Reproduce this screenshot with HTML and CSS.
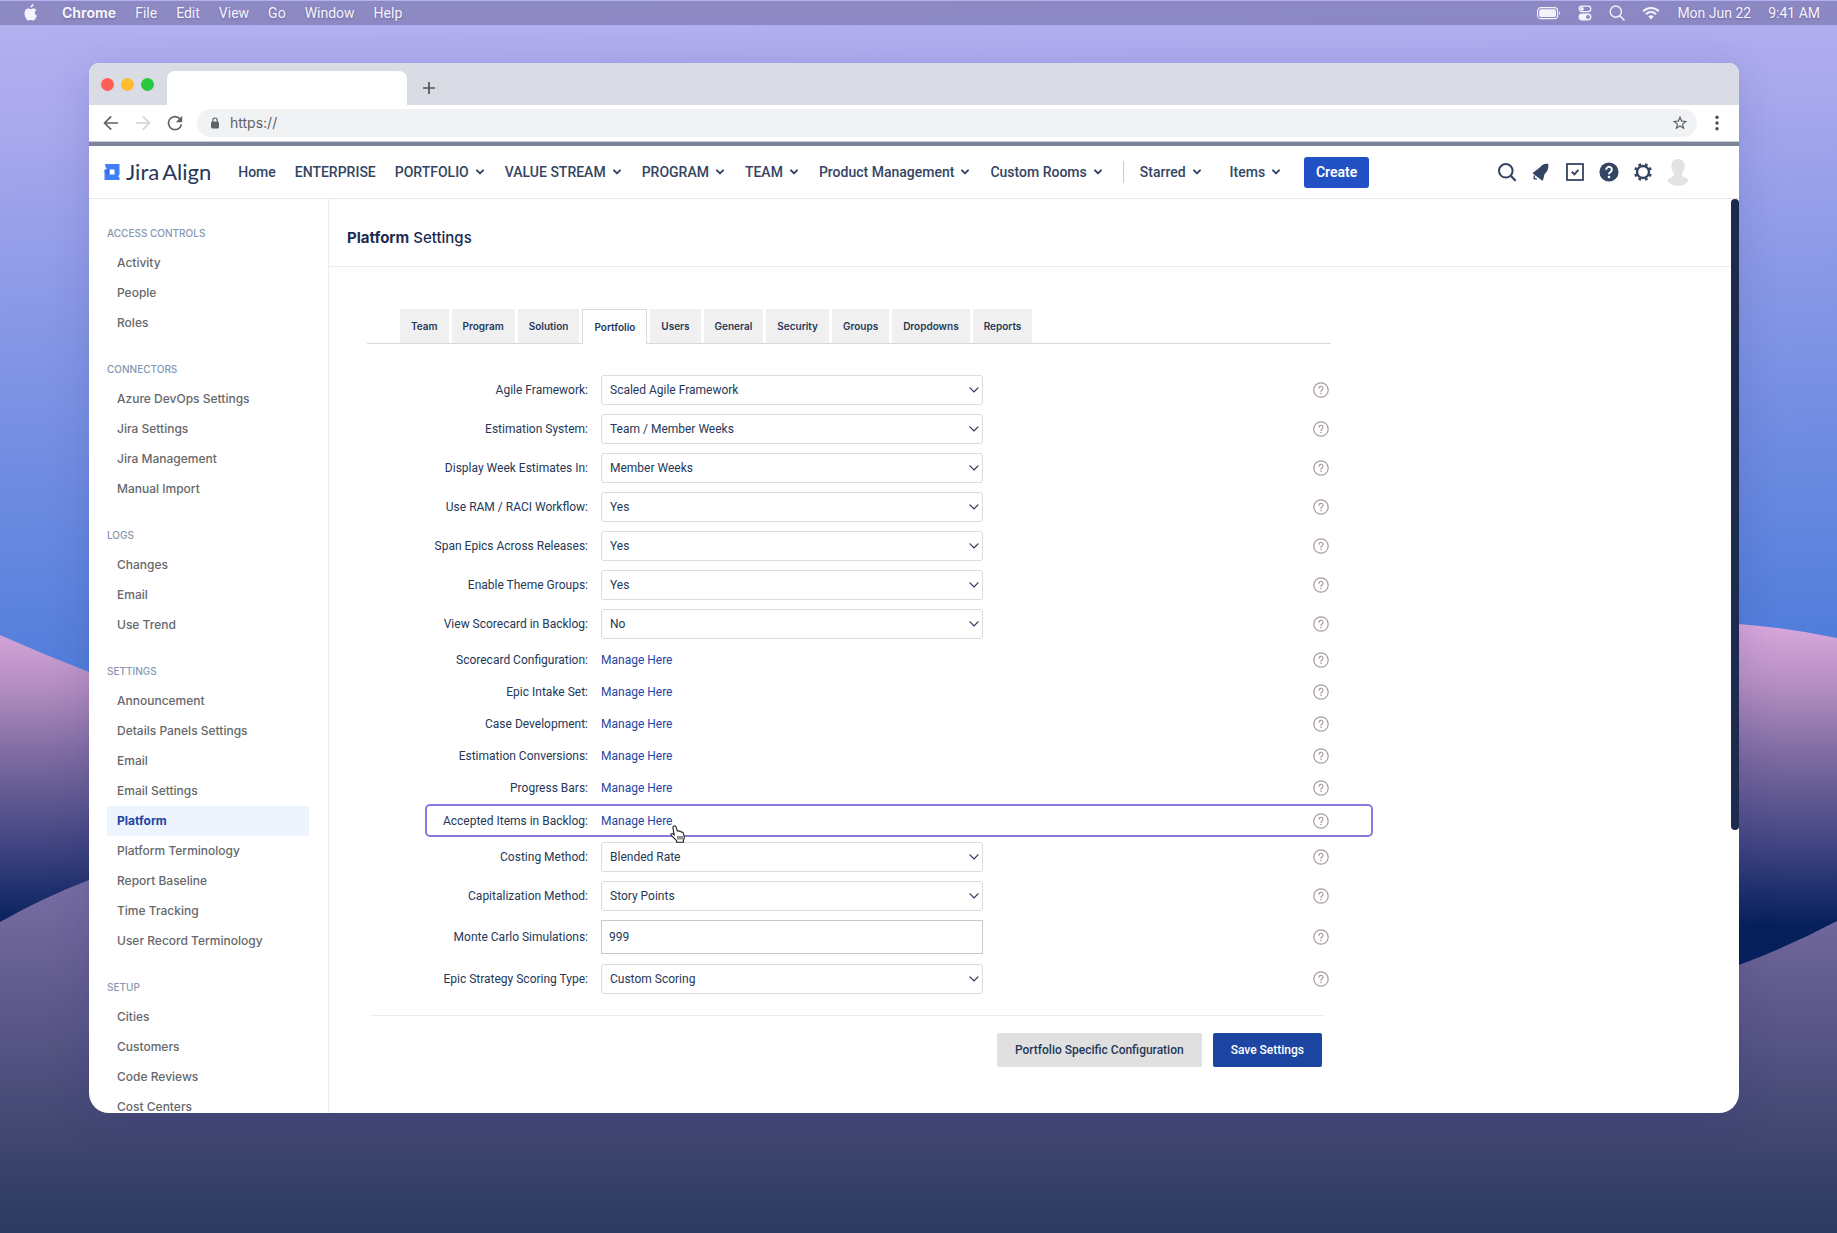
FILE: index.html
```html
<!DOCTYPE html>
<html lang="en">
<head>
<meta charset="utf-8">
<title>Platform Settings</title>
<link rel="stylesheet" href="styles.css">
</head>
<body>
<svg class="defs" aria-hidden="true">
  <symbol id="chev" viewBox="0 0 10 8"><path d="M2 2.4 5 5.4 8 2.4" fill="none" stroke="currentColor" stroke-width="2" stroke-linecap="round" stroke-linejoin="round"/></symbol>
  <symbol id="caret" viewBox="0 0 10 8"><path d="M1 1.8 5 6 9 1.8" fill="none" stroke="currentColor" stroke-width="1.2" stroke-linecap="round"/></symbol>
  <symbol id="help" viewBox="0 0 16 16"><circle cx="8" cy="8" r="7.2" fill="none" stroke="currentColor" stroke-width="1.2"/><path d="M6 6.3a2 2 0 1 1 3 1.7c-.7.4-1 .7-1 1.4" fill="none" stroke="currentColor" stroke-width="1.2" stroke-linecap="round"/><circle cx="8" cy="11.5" r=".8" fill="currentColor"/></symbol>
</svg>
<div class="desktop">
  <svg class="wallpaper" viewBox="0 0 1837 1233" preserveAspectRatio="none" aria-hidden="true">
    <defs>
      <linearGradient id="sky" gradientUnits="userSpaceOnUse" x1="900" y1="0" x2="915" y2="680"><stop offset="0" stop-color="#b4b0f0"/><stop offset=".15" stop-color="#aaa9ed"/><stop offset=".45" stop-color="#8797e6"/><stop offset="1" stop-color="#4d7cda"/></linearGradient>
      <linearGradient id="far" gradientUnits="userSpaceOnUse" x1="0" y1="620" x2="0" y2="925"><stop offset="0" stop-color="#dba9de"/><stop offset=".2" stop-color="#b890c4"/><stop offset=".45" stop-color="#7c6aa0"/><stop offset=".75" stop-color="#3e4380"/><stop offset="1" stop-color="#06205c"/></linearGradient>
      <linearGradient id="near" gradientUnits="userSpaceOnUse" x1="0" y1="870" x2="0" y2="1233"><stop offset="0" stop-color="#7b6fa6"/><stop offset=".35" stop-color="#605b8c"/><stop offset=".7" stop-color="#434873"/><stop offset="1" stop-color="#2b3a5f"/></linearGradient>
    </defs>
    <path fill="url(#sky)" d="M0 0H1837V1233H0Z"/>
    <path fill="url(#far)" d="M0 635Q45 655 89 672L700 800 1400 640Q1600 615 1739 624 1790 628 1837 638V1233H0Z"/>
    <path fill="url(#near)" d="M0 922Q42 898 89 880L500 800 1300 1000 1739 965Q1790 946 1837 921V1233H0Z"/>
  </svg>

  <header class="menubar">
    <svg class="apple" viewBox="0 0 14 18" aria-hidden="true"><path fill="currentColor" d="M9.6 0c.1 1-.3 1.900-.9 2.600-.6.7-1.400 1.100-2.200 1.100-.1-1 .3-1.900.9-2.500C8 .5 8.900.1 9.600 0Zm2.900 6c-1 .6-1.600 1.500-1.600 2.700 0 1.400.8 2.400 2.100 2.900-.4 1.200-1 2.300-1.700 3.300-.6.8-1.200 1.600-2.200 1.600-.9 0-1.200-.6-2.300-.6s-1.400.6-2.300.6c-.9 0-1.600-.8-2.200-1.700C1 12.900.2 10.300.6 8.100.9 6 2.400 4.500 4.200 4.500c1 0 1.800.7 2.500.7s1.700-.8 2.900-.7c1.200 0 2.200.6 2.900 1.500Z"/></svg>
    <strong>Chrome</strong><span>File</span><span>Edit</span><span>View</span><span>Go</span><span>Window</span><span>Help</span>
    <div class="status">
      <svg width="24" height="14" viewBox="0 0 24 14" aria-hidden="true"><rect x=".6" y="1.600" width="20" height="11" rx="3.200" fill="none" stroke="currentColor" stroke-width="1.100"/><rect x="2.200" y="3.200" width="16.800" height="7.800" rx="1.800" fill="currentColor"/><path d="M22 5.200c1.300.6 1.300 3.200 0 3.800Z" fill="currentColor"/></svg>
      <svg width="14" height="16" viewBox="0 0 14 16" aria-hidden="true"><rect x="1.200" y="1.200" width="11.600" height="5.400" rx="2.700" fill="none" stroke="currentColor" stroke-width="1.200"/><circle cx="4" cy="3.900" r="1.800" fill="currentColor"/><path fill="currentColor" fill-rule="evenodd" d="M4 8.600h6a3.400 3.400 0 0 1 0 6.800H4a3.400 3.400 0 0 1 0-6.800Zm6 1.400a2 2 0 1 0 0 4 2 2 0 0 0 0-4Z"/></svg>
      <svg width="16" height="16" viewBox="0 0 16 16" aria-hidden="true"><circle cx="6.800" cy="6.600" r="5.600" fill="none" stroke="currentColor" stroke-width="1.400"/><path d="m11 11 4 4" stroke="currentColor" stroke-width="1.600" stroke-linecap="round"/></svg>
      <svg width="18" height="14" viewBox="0 0 18 14" aria-hidden="true"><g fill="none" stroke="currentColor" stroke-width="2"><path d="M1.200 5.300a11 11 0 0 1 15.600 0"/><path d="M4 8.200a7 7 0 0 1 10 0"/></g><path d="M9 13.500 6.300 10.600a3.900 3.900 0 0 1 5.400 0Z" fill="currentColor"/></svg>
      <span>Mon Jun 22</span><span>9:41 AM</span>
    </div>
  </header>

  <div class="window">
    <div class="tabstrip">
      <i class="dot red"></i><i class="dot amber"></i><i class="dot green"></i>
      <div class="browser-tab"></div>
      <button class="newtab" aria-label="New tab"><svg width="12" height="12" viewBox="0 0 12 12"><path d="M6 0V12M0 6H12" stroke="currentColor" stroke-width="1.700"/></svg></button>
    </div>
    <div class="toolbar">
      <button aria-label="Back"><svg width="16" height="16" viewBox="0 0 16 16"><path d="M15 8H2M8.200 1.400 1.600 8l6.600 6.600" fill="none" stroke="#5f6368" stroke-width="1.700"/></svg></button>
      <button aria-label="Forward"><svg width="16" height="16" viewBox="0 0 16 16"><path d="M1 8h13M7.800 1.400 14.400 8l-6.600 6.600" fill="none" stroke="#d3d4d6" stroke-width="1.700"/></svg></button>
      <button aria-label="Reload"><svg width="16" height="16" viewBox="0 0 16 16"><path d="M13.400 4.400A6.500 6.500 0 1 0 14.400 9.400" fill="none" stroke="#5f6368" stroke-width="1.700"/><path d="M15.200.8v6.400H8.800Z" fill="#5f6368"/></svg></button>
      <label class="address">
        <svg width="10" height="12" viewBox="0 0 10 12" aria-hidden="true"><rect x="1" y="4.500" width="8" height="7" rx="1.500" fill="#5f6368"/><path d="M2.800 5V3.200a2.200 2.200 0 0 1 4.400 0V5" fill="none" stroke="#5f6368" stroke-width="1.200"/></svg>
        <input type="text" value="https://" aria-label="Address">
        <svg width="14" height="14" viewBox="0 0 14 14" aria-hidden="true"><path d="m7 1.200 1.600 3.900 4.200.3-3.200 2.700 1 4.100L7 10l-3.600 2.200 1-4.100L1.200 5.400l4.200-.3Z" fill="none" stroke="#5f6368" stroke-width="1.200"/></svg>
      </label>
      <button class="dots" aria-label="Menu"><svg width="4" height="16" viewBox="0 0 4 16"><g fill="#4a4d52"><circle cx="2" cy="2.300" r="1.700"/><circle cx="2" cy="8" r="1.700"/><circle cx="2" cy="13.700" r="1.700"/></g></svg></button>
    </div>

    <nav class="topnav">
      <a class="logo" href="#"><svg width="16" height="16" viewBox="0 0 16 16" aria-hidden="true"><path fill="#3f80f7" fill-rule="evenodd" d="M1 0H15.500V11Q13 12 15.500 13.500V16H.5V5.500H3Q1.200 4 1 0ZM5.500 5.500V10.500H10.500V5.500Z"/><path fill="#2360d8" d="M.5 5.500H5.500V10.500H4Q.5 10 .5 5.500Z" opacity=".6"/></svg><span>Jira</span><span>Align</span></a>
      <a href="#">Home</a>
      <a href="#">ENTERPRISE</a>
      <a class="drop" href="#">PORTFOLIO<svg><use href="#chev"/></svg></a>
      <a class="drop" href="#">VALUE STREAM<svg><use href="#chev"/></svg></a>
      <a class="drop" href="#">PROGRAM<svg><use href="#chev"/></svg></a>
      <a class="drop" href="#">TEAM<svg><use href="#chev"/></svg></a>
      <a class="drop" href="#">Product Management<svg><use href="#chev"/></svg></a>
      <a class="drop" href="#">Custom Rooms<svg><use href="#chev"/></svg></a>
      <a class="drop sep" href="#">Starred<svg><use href="#chev"/></svg></a>
      <a class="drop items" href="#">Items<svg><use href="#chev"/></svg></a>
      <button class="create">Create</button>
      <div class="tools">
        <button aria-label="Search"><svg viewBox="0 0 20 20"><circle cx="8.800" cy="8.800" r="6.800" fill="none" stroke="currentColor" stroke-width="2"/><path d="m13.800 13.800 4.200 4.400" stroke="currentColor" stroke-width="2.200" stroke-linecap="round"/></svg></button>
        <button aria-label="Announcements"><svg viewBox="0 0 20 20"><path fill="currentColor" d="M17.300 1.800c-4.500-.4-6.400.9-8 3.200L2 10.700c-.4.4-.3.8.1 1L11 18.500c.4.300.8.100 1-.3l1.500-6c3.300-2.700 4.300-6 3.800-10.400Z"/><path d="M3.500 13.500 3 16.500l2.800.6" fill="none" stroke="currentColor" stroke-width="1.400"/></svg></button>
        <button aria-label="Tasks"><svg viewBox="0 0 20 20"><rect x="2" y="2" width="16" height="16" fill="none" stroke="currentColor" stroke-width="1.800"/><path d="m6.800 9.800 2.600 2.600 4-4.600" fill="none" stroke="currentColor" stroke-width="2"/></svg></button>
        <button aria-label="Help"><svg viewBox="0 0 20 20"><circle cx="10" cy="10" r="9.600" fill="currentColor"/><path d="M7.200 7.700a2.800 2.800 0 1 1 4.300 2.300c-1 .7-1.500 1.100-1.500 2.200" fill="none" stroke="#fff" stroke-width="2"/><circle cx="10" cy="15" r="1.300" fill="#fff"/></svg></button>
        <button aria-label="Settings"><svg viewBox="0 0 20 20"><circle cx="10" cy="10" r="6" fill="none" stroke="currentColor" stroke-width="2.400"/><path d="M7.200 4 6.400 1.700M12.800 4 13.600 1.700M7.200 16 6.400 18.300M12.800 16 13.600 18.300M4 7.200 1.700 6.400M4 12.800 1.700 13.600M16 7.200 18.300 6.400M16 12.800 18.300 13.600" stroke="currentColor" stroke-width="2.800"/></svg></button>
        <button class="avatar" aria-label="Profile"><svg viewBox="0 0 22 28"><path fill="#e3e3e4" d="M11 1c4 0 6.600 2.500 6.500 6.300 0 1.200.3 3-.1 4-.5 1.500-1.300 2.200-2 3.700-.5 1.200-.6 2.700.8 3.400 2.300.8 4.800 2.200 5.300 4.400C19 26.500 15 28 11 28S3 26.500.5 22.800c.5-2.200 3-3.600 5.300-4.400 1.400-.7 1.300-2.200.8-3.400-.7-1.500-1.500-2.200-2-3.700-.4-1-.1-2.800-.1-4C4.400 3.500 7 1 11 1Z"/></svg></button>
      </div>
    </nav>

    <div class="body">
      <aside class="sidebar">
        <h2>ACCESS CONTROLS</h2>
        <ul><li><a href="#">Activity</a></li><li><a href="#">People</a></li><li><a href="#">Roles</a></li></ul>
        <h2>CONNECTORS</h2>
        <ul><li><a href="#">Azure DevOps Settings</a></li><li><a href="#">Jira Settings</a></li><li><a href="#">Jira Management</a></li><li><a href="#">Manual Import</a></li></ul>
        <h2>LOGS</h2>
        <ul><li><a href="#">Changes</a></li><li><a href="#">Email</a></li><li><a href="#">Use Trend</a></li></ul>
        <h2>SETTINGS</h2>
        <ul><li><a href="#">Announcement</a></li><li><a href="#">Details Panels Settings</a></li><li><a href="#">Email</a></li><li><a href="#">Email Settings</a></li><li><a class="current" href="#">Platform</a></li><li><a href="#">Platform Terminology</a></li><li><a href="#">Report Baseline</a></li><li><a href="#">Time Tracking</a></li><li><a href="#">User Record Terminology</a></li></ul>
        <h2>SETUP</h2>
        <ul><li><a href="#">Cities</a></li><li><a href="#">Customers</a></li><li><a href="#">Code Reviews</a></li><li><a href="#">Cost Centers</a></li></ul>
      </aside>

      <main class="main">
        <h1><b>Platform</b> Settings</h1>
        <div class="content">
          <div class="tabs" role="tablist">
            <button role="tab">Team</button><button role="tab">Program</button><button role="tab">Solution</button><button role="tab" class="on" aria-selected="true">Portfolio</button><button role="tab">Users</button><button role="tab">General</button><button role="tab">Security</button><button role="tab">Groups</button><button role="tab">Dropdowns</button><button role="tab">Reports</button>
          </div>
          <form class="form">
            <div class="row"><label for="f1">Agile Framework:</label><span class="select"><select id="f1"><option>Scaled Agile Framework</option></select><svg><use href="#caret"/></svg></span><svg class="help"><use href="#help"/></svg></div>
            <div class="row"><label for="f2">Estimation System:</label><span class="select"><select id="f2"><option>Team / Member Weeks</option></select><svg><use href="#caret"/></svg></span><svg class="help"><use href="#help"/></svg></div>
            <div class="row"><label for="f3">Display Week Estimates In:</label><span class="select"><select id="f3"><option>Member Weeks</option></select><svg><use href="#caret"/></svg></span><svg class="help"><use href="#help"/></svg></div>
            <div class="row"><label for="f4">Use RAM / RACI Workflow:</label><span class="select"><select id="f4"><option>Yes</option></select><svg><use href="#caret"/></svg></span><svg class="help"><use href="#help"/></svg></div>
            <div class="row"><label for="f5">Span Epics Across Releases:</label><span class="select"><select id="f5"><option>Yes</option></select><svg><use href="#caret"/></svg></span><svg class="help"><use href="#help"/></svg></div>
            <div class="row"><label for="f6">Enable Theme Groups:</label><span class="select"><select id="f6"><option>Yes</option></select><svg><use href="#caret"/></svg></span><svg class="help"><use href="#help"/></svg></div>
            <div class="row"><label for="f7">View Scorecard in Backlog:</label><span class="select"><select id="f7"><option>No</option></select><svg><use href="#caret"/></svg></span><svg class="help"><use href="#help"/></svg></div>
            <div class="links">
              <div class="row"><span class="name">Scorecard Configuration:</span><a href="#">Manage Here</a><svg class="help"><use href="#help"/></svg></div>
              <div class="row"><span class="name">Epic Intake Set:</span><a href="#">Manage Here</a><svg class="help"><use href="#help"/></svg></div>
              <div class="row"><span class="name">Case Development:</span><a href="#">Manage Here</a><svg class="help"><use href="#help"/></svg></div>
              <div class="row"><span class="name">Estimation Conversions:</span><a href="#">Manage Here</a><svg class="help"><use href="#help"/></svg></div>
              <div class="row"><span class="name">Progress Bars:</span><a href="#">Manage Here</a><svg class="help"><use href="#help"/></svg></div>
              <div class="row marked"><span class="name">Accepted Items in Backlog:</span><a href="#">Manage Here<svg class="cursor" viewBox="0 0 16 18" aria-hidden="true"><path d="M4.200 1c.9-.3 1.600.2 1.900 1.100L7.300 6c.9-.5 1.700-.2 2 .4.900-.4 1.700 0 2 .7 1.100-.3 1.800.2 2 1.100l.9 3.600c.3 1.600-.4 2.500-.8 3.600v1.800H6.600v-1.500C5.200 14.400 3 12.200 1.300 10.400.4 9.300 1.600 8 2.900 8.800l1.300 1L2.900 2.900C2.700 2 3.300 1.300 4.200 1Z" fill="#fff" stroke="#222" stroke-width="1.100"/><path d="M8 11v3.500M10 11v3.500M12 11v3.500" stroke="#222" stroke-width="1"/></svg></a><svg class="help"><use href="#help"/></svg></div>
            </div>
            <div class="row"><label for="f8">Costing Method:</label><span class="select"><select id="f8"><option>Blended Rate</option></select><svg><use href="#caret"/></svg></span><svg class="help"><use href="#help"/></svg></div>
            <div class="row"><label for="f9">Capitalization Method:</label><span class="select"><select id="f9"><option>Story Points</option></select><svg><use href="#caret"/></svg></span><svg class="help"><use href="#help"/></svg></div>
            <div class="row tall"><label for="f10">Monte Carlo Simulations:</label><input id="f10" type="text" value="999"><svg class="help"><use href="#help"/></svg></div>
            <div class="row"><label for="f11">Epic Strategy Scoring Type:</label><span class="select"><select id="f11"><option>Custom Scoring</option></select><svg><use href="#caret"/></svg></span><svg class="help"><use href="#help"/></svg></div>
          </form>
          <div class="actions"><button>Portfolio Specific Configuration</button><button class="primary">Save Settings</button></div>
        </div>
      </main>
      <div class="scroll"><div class="thumb"></div></div>
    </div>
  </div>
</div>
</body>
</html>
```
FILE: styles.css
```css
* { box-sizing: border-box; }
body { margin: 0; font-family: Inter, "Liberation Sans", sans-serif; color: #253858; }
a { color: inherit; text-decoration: none; }
button { border: 0; padding: 0; background: none; font: inherit; color: inherit; display: flex; align-items: center; justify-content: center; }
svg { display: block; }
.defs { display: none; }

.desktop { position: relative; height: 100vh; display: flex; flex-direction: column; overflow: hidden; isolation: isolate; }
.wallpaper { position: absolute; inset: 0; width: 100%; height: 100%; z-index: -1; }

.menubar { flex: none; height: 24px; margin-top: 1px; padding: 0 17px 0 24px; display: flex; align-items: center; gap: 19px; background: rgba(88, 84, 134, .42); color: #f4f3fc; font: 14px/20px Roboto, sans-serif; text-shadow: 0 1px 2px rgba(40, 30, 90, .3); }
.apple { width: 14px; height: 18px; margin-right: 5px; }
.menubar strong { font-family: Inter, sans-serif; font-weight: 700; }
.status { margin-left: auto; display: flex; align-items: center; gap: 17px; }

.window { flex: 1; min-height: 0; margin: 38px 98px 120px 89px; display: flex; flex-direction: column; overflow: hidden; background: #fff; border-radius: 10px 10px 20px 20px; box-shadow: 0 8px 40px rgba(40, 40, 120, .16); }
.tabstrip { flex: none; height: 42px; padding-left: 12px; display: flex; align-items: center; gap: 7px; background: #dadce5; }
.dot { width: 13px; height: 13px; border-radius: 50%; }
.red { background: #ff5f57; }
.amber { background: #febc2e; }
.green { background: #28c840; }
.browser-tab { align-self: flex-end; width: 240px; height: 34px; margin-left: 6px; background: #fff; border-radius: 8px 8px 0 0; }
.newtab { width: 30px; height: 30px; color: #4f5258; margin-top: 7px; }
.toolbar { flex: none; height: 37px; padding: 4px 20px 4px 14px; display: flex; align-items: center; gap: 16px; border-bottom: 1px solid #c9cad0; }
.address { flex: 1; height: 28px; padding: 0 10px 0 13px; display: flex; align-items: center; gap: 10px; background: #f1f2f4; border-radius: 14px; margin-left: -2px; }
.address input { flex: 1; min-width: 0; border: 0; padding: 0; background: none; font: 14px/20px Inter, sans-serif; color: #5f6368; }
.dots { margin-left: 2px; }

.topnav { flex: none; height: 57px; padding: 0 50px 0 15px; display: flex; align-items: center; gap: 19px; border-top: 4px solid #7c8497; border-bottom: 1px solid #e8e8ea; font: 500 14px/20px Roboto, sans-serif; white-space: nowrap; color: #344563; }
.topnav > a { display: flex; align-items: center; }
.topnav .drop { gap: 6px; margin-right: 1px; }
.drop svg { width: 10px; height: 8px; }
.topnav .logo { gap: 3px; margin-right: 8px; font: 22px/28px Lato, sans-serif; color: #253858; }
.logo svg { margin-right: 3px; }
.topnav .sep { border-left: 1px solid #c9c9d6; padding: 1px 0 1px 16px; }
.topnav .items { margin-left: 8px; }
.create { width: 65px; height: 31px; margin-left: 3px; border-radius: 3px; background: #2251c5; color: #fff; font-weight: 600; }
.tools { margin-left: auto; display: flex; align-items: center; gap: 14px; }
.tools svg { width: 20px; height: 20px; }
.tools .avatar svg { width: 22px; height: 28px; }

.body { flex: 1; min-height: 0; display: flex; }
.sidebar { flex: none; width: 240px; padding: 24px 19px 0 18px; overflow: hidden; border-right: 1px solid #ececee; }
.sidebar h2 { margin: 0; font-size: 10px; line-height: 20px; font-weight: 500; color: #8597b0; height: 25px; }
.sidebar ul { list-style: none; margin: 0 0 21px; padding: 0; }
.sidebar a { display: block; height: 30px; padding-left: 10px; font-size: 12px; line-height: 30px; font-weight: 500; color: #66686b; }
.sidebar .current { background: #edf4fe; color: #1d46a3; font-weight: 700; }

.main { flex: 1; min-width: 0; overflow: hidden; }
.main h1 { margin: 0; height: 68px; padding: 24px 18px 0; border-bottom: 1px solid #ececee; font-size: 15px; line-height: 30px; font-weight: 500; color: #1c2b50; }
.content { max-width: 1044px; padding: 42px 0 0 38px; }
.tabs { display: flex; gap: 3px; padding-left: 33px; margin-right: 42px; border-bottom: 1px solid #d9d9dc; }
.tabs button { height: 34px; padding: 0 11px; background: #f0f0f0; font-size: 10px; font-weight: 600; color: #253858; }
.tabs .on { height: 35px; margin-bottom: -1px; background: #fff; border: 1px solid #d9d9dc; border-bottom: 0; }

.form { padding: 26px 0 0 58px; font: 12px/20px Roboto, sans-serif; color: #253858; }
.row { height: 39px; display: grid; grid-template-columns: 163px 382px 1fr; column-gap: 13px; align-items: center; padding-right: 44px; }
.row label, .name { text-align: right; white-space: nowrap; }
.select { display: grid; grid-template-columns: 1fr 14px; align-items: center; }
.select select { grid-area: 1 / 1 / 2 / 3; appearance: none; width: 100%; height: 30px; padding: 0 8px; border: 1px solid #dcdcdf; border-radius: 3px; background: #fff; font: inherit; color: inherit; }
.select svg { grid-area: 1 / 2 / 2 / 3; width: 10px; height: 8px; pointer-events: none; z-index: 1; color: #253858; }
.row input { height: 34px; padding: 0 7px; border: 1px solid #c8c8c8; background: #fff; font: inherit; color: inherit; }
.tall { height: 44px; }
.help { width: 16px; height: 16px; justify-self: end; color: #a89a9a; }
.links { padding-top: 1px; }
.links .row { height: 32px; }
.links a { position: relative; justify-self: start; color: #1d46a3; }
.links .marked { height: 33px; border-radius: 5px; box-shadow: inset 0 0 0 2px #8a78de; }
.cursor { position: absolute; left: 69px; top: 14px; width: 16px; height: 18px; }
.actions { margin: 17px 49px 0 3px; padding: 17px 2px 0 0; border-top: 1px solid #ececee; display: flex; justify-content: flex-end; gap: 11px; }
.actions button { height: 34px; padding: 0 18px; border-radius: 2px; background: #e0e0e1; font: 500 12px/20px Roboto, sans-serif; color: #253858; }
.actions .primary { background: #1d46a3; color: #fff; }

.scroll { flex: none; width: 8px; }
.thumb { height: 69%; border-radius: 4px; background: #1c2a4e; }
```
